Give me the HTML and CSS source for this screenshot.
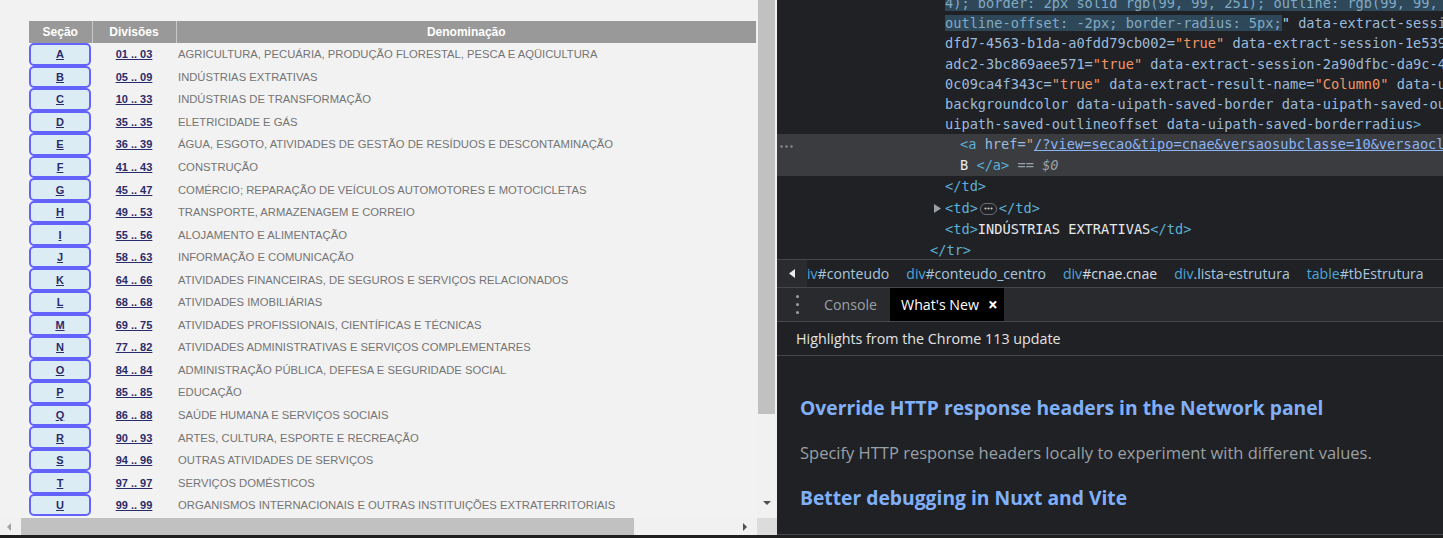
FILE: index.html
```html
<!DOCTYPE html>
<html lang="pt-BR">
<head>
<meta charset="utf-8">
<title>CNAE - Estrutura</title>
<link rel="stylesheet" href="styles.css">
</head>
<body>
<div class="app">
  <div class="page">
    <div class="page-main">
      <div class="viewport">
        <table class="estrutura" id="tbEstrutura">
          <colgroup><col class="c1"><col class="c2"><col class="c3"></colgroup>
          <thead>
            <tr><th>Seção</th><th>Divisões</th><th>Denominação</th></tr>
          </thead>
          <tbody>
            <tr><td><div class="sec"><a href="#">A</a></div></td><td class="div"><a href="#">01 .. 03</a></td><td class="den">AGRICULTURA, PECUÁRIA, PRODUÇÃO FLORESTAL, PESCA E AQÜICULTURA</td></tr>
            <tr><td><div class="sec"><a href="#">B</a></div></td><td class="div"><a href="#">05 .. 09</a></td><td class="den">INDÚSTRIAS EXTRATIVAS</td></tr>
            <tr><td><div class="sec"><a href="#">C</a></div></td><td class="div"><a href="#">10 .. 33</a></td><td class="den">INDÚSTRIAS DE TRANSFORMAÇÃO</td></tr>
            <tr><td><div class="sec"><a href="#">D</a></div></td><td class="div"><a href="#">35 .. 35</a></td><td class="den">ELETRICIDADE E GÁS</td></tr>
            <tr><td><div class="sec"><a href="#">E</a></div></td><td class="div"><a href="#">36 .. 39</a></td><td class="den">ÁGUA, ESGOTO, ATIVIDADES DE GESTÃO DE RESÍDUOS E DESCONTAMINAÇÃO</td></tr>
            <tr><td><div class="sec"><a href="#">F</a></div></td><td class="div"><a href="#">41 .. 43</a></td><td class="den">CONSTRUÇÃO</td></tr>
            <tr><td><div class="sec"><a href="#">G</a></div></td><td class="div"><a href="#">45 .. 47</a></td><td class="den">COMÉRCIO; REPARAÇÃO DE VEÍCULOS AUTOMOTORES E MOTOCICLETAS</td></tr>
            <tr><td><div class="sec"><a href="#">H</a></div></td><td class="div"><a href="#">49 .. 53</a></td><td class="den">TRANSPORTE, ARMAZENAGEM E CORREIO</td></tr>
            <tr><td><div class="sec"><a href="#">I</a></div></td><td class="div"><a href="#">55 .. 56</a></td><td class="den">ALOJAMENTO E ALIMENTAÇÃO</td></tr>
            <tr><td><div class="sec"><a href="#">J</a></div></td><td class="div"><a href="#">58 .. 63</a></td><td class="den">INFORMAÇÃO E COMUNICAÇÃO</td></tr>
            <tr><td><div class="sec"><a href="#">K</a></div></td><td class="div"><a href="#">64 .. 66</a></td><td class="den">ATIVIDADES FINANCEIRAS, DE SEGUROS E SERVIÇOS RELACIONADOS</td></tr>
            <tr><td><div class="sec"><a href="#">L</a></div></td><td class="div"><a href="#">68 .. 68</a></td><td class="den">ATIVIDADES IMOBILIÁRIAS</td></tr>
            <tr><td><div class="sec"><a href="#">M</a></div></td><td class="div"><a href="#">69 .. 75</a></td><td class="den">ATIVIDADES PROFISSIONAIS, CIENTÍFICAS E TÉCNICAS</td></tr>
            <tr><td><div class="sec"><a href="#">N</a></div></td><td class="div"><a href="#">77 .. 82</a></td><td class="den">ATIVIDADES ADMINISTRATIVAS E SERVIÇOS COMPLEMENTARES</td></tr>
            <tr><td><div class="sec"><a href="#">O</a></div></td><td class="div"><a href="#">84 .. 84</a></td><td class="den">ADMINISTRAÇÃO PÚBLICA, DEFESA E SEGURIDADE SOCIAL</td></tr>
            <tr><td><div class="sec"><a href="#">P</a></div></td><td class="div"><a href="#">85 .. 85</a></td><td class="den">EDUCAÇÃO</td></tr>
            <tr><td><div class="sec"><a href="#">Q</a></div></td><td class="div"><a href="#">86 .. 88</a></td><td class="den">SAÚDE HUMANA E SERVIÇOS SOCIAIS</td></tr>
            <tr><td><div class="sec"><a href="#">R</a></div></td><td class="div"><a href="#">90 .. 93</a></td><td class="den">ARTES, CULTURA, ESPORTE E RECREAÇÃO</td></tr>
            <tr><td><div class="sec"><a href="#">S</a></div></td><td class="div"><a href="#">94 .. 96</a></td><td class="den">OUTRAS ATIVIDADES DE SERVIÇOS</td></tr>
            <tr><td><div class="sec"><a href="#">T</a></div></td><td class="div"><a href="#">97 .. 97</a></td><td class="den">SERVIÇOS DOMÉSTICOS</td></tr>
            <tr><td><div class="sec"><a href="#">U</a></div></td><td class="div"><a href="#">99 .. 99</a></td><td class="den">ORGANISMOS INTERNACIONAIS E OUTRAS INSTITUIÇÕES EXTRATERRITORIAIS</td></tr>
          </tbody>
        </table>
      </div>
      <div class="vscroll">
        <div class="vthumb"></div>
        <div class="vtrack"><span class="arr-down"></span></div>
      </div>
    </div>
    <div class="hscroll">
      <div class="hleft"><span class="arr-left"></span></div>
      <div class="hthumb"></div>
      <div class="hmid"><span class="arr-right"></span></div>
      <div class="corner"></div>
    </div>
  </div>

  <div class="devtools">
    <div class="elements">
      <div class="code">
        <div class="ln in1"><span class="sel">4); border: 2px solid rgb(99, 99, 251); outline: rgb(99, 99, 251) solid 2px;</span></div>
        <div class="ln in1"><span class="sel">outline-offset: -2px; border-radius: 5px;</span><span class="q">"</span><span class="an"> data-extract-session-7b3a1c52-</span></div>
        <div class="ln in1"><span class="an">dfd7-4563-b1da-a0fdd79cb002=</span><span class="av">"true"</span><span class="an"> data-extract-session-1e539a4c-</span></div>
        <div class="ln in1"><span class="an">adc2-3bc869aee571=</span><span class="av">"true"</span><span class="an"> data-extract-session-2a90dfbc-da9c-4e21-</span></div>
        <div class="ln in1"><span class="an">0c09ca4f343c=</span><span class="av">"true"</span><span class="an"> data-extract-result-name=</span><span class="av">"Column0"</span><span class="an"> data-uipath-saved-</span></div>
        <div class="ln in1"><span class="an">backgroundcolor data-uipath-saved-border data-uipath-saved-outline</span></div>
        <div class="ln in1"><span class="an">uipath-saved-outlineoffset data-uipath-saved-borderradius</span><span class="tg">&gt;</span></div>
        <div class="selnode">
          <div class="ln2 gutline"><span class="gut"><svg width="13" height="3" viewBox="0 0 13 3"><circle cx="1.5" cy="1.5" r="1.2" fill="#8a8d91"/><circle cx="6.5" cy="1.5" r="1.2" fill="#8a8d91"/><circle cx="11.5" cy="1.5" r="1.2" fill="#8a8d91"/></svg></span><span class="tg">&lt;a </span><span class="an">href=</span><span class="av">"</span><span class="lk">/?view=secao&amp;tipo=cnae&amp;versaosubclasse=10&amp;versaoclasse=7</span><span class="av">"</span><span class="tg">&gt;</span></div>
          <div class="ln2 in2"><span class="tx">B </span><span class="tg">&lt;/a&gt;</span><span class="dim"> == </span><span class="dim it">$0</span></div>
        </div>
        <div class="ln3 in1"><span class="tg">&lt;/td&gt;</span></div>
        <div class="ln3 in1t"><span class="tri"><svg width="7" height="9" viewBox="0 0 7 9"><path d="M0 0 L7 4.5 L0 9 Z" fill="#9aa0a6"/></svg></span><span class="tg">&lt;td&gt;</span><span class="pill"><svg width="9" height="3" viewBox="0 0 9 3"><circle cx="1.5" cy="1.5" r="1.1" fill="#c4c7c5"/><circle cx="4.5" cy="1.5" r="1.1" fill="#c4c7c5"/><circle cx="7.5" cy="1.5" r="1.1" fill="#c4c7c5"/></svg></span><span class="tg">&lt;/td&gt;</span></div>
        <div class="ln3 in1"><span class="tg">&lt;td&gt;</span><span class="tx">INDÚSTRIAS EXTRATIVAS</span><span class="tg">&lt;/td&gt;</span></div>
        <div class="ln3 in0"><span class="tg">&lt;/tr&gt;</span></div>
      </div>
    </div>

    <div class="crumbs">
      <div class="crumb-arrow"><svg width="6" height="9" viewBox="0 0 6 9"><path d="M6 0 L0 4.5 L6 9 Z" fill="#e8eaed"/></svg></div>
      <div class="crumb-list">
        <span class="crumb"><span class="tag">iv</span><span class="rest">#conteudo</span></span>
        <span class="crumb"><span class="tag">div</span><span class="rest">#conteudo_centro</span></span>
        <span class="crumb"><span class="tag">div</span><span class="rest light">#cnae.cnae</span></span>
        <span class="crumb"><span class="tag">div</span><span class="rest">.lista-estrutura</span></span>
        <span class="crumb"><span class="tag">table</span><span class="rest">#tbEstrutura</span></span>
      </div>
    </div>

    <div class="tabs">
      <div class="kebab"><span></span><span></span><span></span></div>
      <div class="tab">Console</div>
      <div class="tab active"><span>What's New</span><span class="close">×</span></div>
    </div>

    <div class="wn-head">Highlights from the Chrome 113 update</div>

    <div class="wn-body">
      <h2 class="wn-title">Override HTTP response headers in the Network panel</h2>
      <p class="wn-text">Specify HTTP response headers locally to experiment with different values.</p>
      <h2 class="wn-title">Better debugging in Nuxt and Vite</h2>
    </div>
  </div>
</div>
</body>
</html>
```

FILE: styles.css
```css
* { box-sizing: border-box; }
html, body { margin: 0; padding: 0; }
body {
  width: 1443px;
  height: 538px;
  overflow: hidden;
  background: #1f1f1f;
}
.app { display: flex; height: 535px; }

/* ---------- left page ---------- */
.page {
  width: 777px;
  flex: none;
  display: flex;
  flex-direction: column;
  background: #f2f2f2;
}
.page-main { display: flex; height: 518px; }
.viewport { width: 757px; overflow: hidden; }

.estrutura {
  margin: 21px 0 0 29px;
  border-collapse: collapse;
  table-layout: fixed;
  width: 727px;
  font-family: "Liberation Sans", Arial, sans-serif;
  font-size: 11px;
}
.estrutura .c1 { width: 63px; }
.estrutura .c2 { width: 84px; }
.estrutura .c3 { width: 580px; }
.estrutura th {
  background: #999999;
  color: #ffffff;
  font-weight: bold;
  font-size: 12px;
  height: 22px;
  padding: 0;
  text-align: center;
  border-left: 1px solid #c9c9c9;
}
.estrutura th:first-child { border-left: 0; }
.estrutura tbody tr { height: 22.55px; }
.estrutura td { padding: 0; vertical-align: middle; }
.estrutura a { color: #2b2b6b; font-weight: bold; text-decoration: underline; }
.sec {
  height: 22.55px;
  width: 62px;
  display: flex;
  align-items: center;
  justify-content: center;
  background: #dcecf5;
  border: 2px solid rgb(99, 99, 251);
  border-radius: 5px;
}
.estrutura .div { text-align: center; }
.estrutura .den { color: #747474; padding-left: 2px; white-space: nowrap; font-size: 11.25px; }

.vscroll {
  width: 20px;
  display: flex;
  flex-direction: column;
  background: #f1f1f1;
}
.vthumb { margin-left: 1px; width: 17px; height: 414px; background: #c1c1c1; }
.vtrack { flex: 1; display: flex; align-items: flex-end; padding: 0 0 13px 6px; }
.arr-down {
  width: 0; height: 0;
  border-left: 4px solid transparent;
  border-right: 4px solid transparent;
  border-top: 4px solid #505050;
}
.hscroll { display: flex; height: 17px; background: #f1f1f1; }
.hleft { width: 21px; display: flex; align-items: center; padding-left: 7px; }
.arr-left {
  width: 0; height: 0;
  border-top: 4px solid transparent;
  border-bottom: 4px solid transparent;
  border-right: 4px solid #a3a3a3;
}
.hthumb { width: 613px; background: #c1c1c1; }
.hmid { flex: 1; display: flex; align-items: center; justify-content: flex-end; padding-right: 10px; }
.arr-right {
  width: 0; height: 0;
  border-top: 4px solid transparent;
  border-bottom: 4px solid transparent;
  border-left: 4px solid #505050;
}
.corner { width: 20px; background: #dcdcdc; }

/* ---------- devtools ---------- */
.devtools {
  width: 666px;
  flex: none;
  display: flex;
  flex-direction: column;
  background: #202124;
  font-family: "Open Sans", "Noto Sans", sans-serif;
  color: #e3e3e3;
  border-bottom: 1px solid #45474b;
}
.elements {
  height: 260px;
  flex: none;
  overflow: hidden;
  border-bottom: 1px solid #45474b;
}
.code {
  margin-top: -7px;
  font-family: "DejaVu Sans Mono", "Liberation Mono", monospace;
  font-size: 13.65px;
  color: #e8eaed;
}
.ln, .ln2, .ln3 { white-space: pre; overflow: hidden; }
.ln { height: 20.2px; line-height: 20.2px; }
.ln2 { height: 21px; line-height: 21px; }
.ln3 { height: 21.3px; line-height: 21.3px; }
.in0 { padding-left: 153px; }
.in1 { padding-left: 168px; }
.in1t { padding-left: 157px; }
.in2 { padding-left: 183px; }
.selnode { background: #3b3c3f; }
.gutline { padding-left: 3px; }
.gut { display: inline-block; width: 180px; vertical-align: middle; line-height: 0; }
.sel { background: #2e4859; color: #82aac4; }
.q { color: #d0d4d8; }
.an { color: #9bbbdc; }
.av { color: #f29766; }
.tg { color: #5db0d7; }
.tx { color: #e8eaed; }
.lk { color: #8ab4f8; text-decoration: underline; }
.dim { color: #9aa0a6; }
.it { font-style: italic; }
.tri { display: inline-block; width: 11px; line-height: 0; vertical-align: middle; }
.pill {
  display: inline-flex;
  align-items: center;
  justify-content: center;
  width: 17px;
  height: 12px;
  margin: 0 2px;
  border: 1px solid #6b6e72;
  border-radius: 6px;
  vertical-align: middle;
}

.crumbs {
  height: 28px;
  flex: none;
  display: flex;
  border-bottom: 1px solid #45474b;
  font-size: 14.1px;
}
.crumb-arrow {
  width: 30px;
  display: flex;
  align-items: center;
  padding-left: 12px;
  background: #2a2b2e;
}
.crumb-list { display: flex; align-items: center; gap: 17px; white-space: nowrap; overflow: hidden; }
.crumb .tag { color: #4ea6d8; }
.crumb .rest { color: #a9c6de; }
.crumb .rest.light { color: #d6dbe0; }

.tabs {
  height: 34px;
  flex: none;
  display: flex;
  align-items: stretch;
  background: #292a2d;
  border-bottom: 1px solid #45474b;
  font-size: 14.2px;
}
.kebab {
  width: 40px;
  display: flex;
  flex-direction: column;
  justify-content: center;
  gap: 5px;
  padding-left: 19px;
}
.kebab span { width: 3px; height: 3px; border-radius: 50%; background: #9aa0a6; }
.tab { display: flex; align-items: center; padding: 0 13px 0 7px; color: #9aa0a6; white-space: nowrap; }
.tab.active { background: #000000; color: #ffffff; padding: 0 6px 0 11px; }
.close { margin-left: 9px; font-size: 17px; line-height: 16px; font-weight: bold; color: #ffffff; }

.wn-head {
  height: 34px;
  flex: none;
  display: flex;
  align-items: center;
  padding-left: 19px;
  font-size: 14.3px;
  color: #e3e3e3;
  border-bottom: 1px solid #45474b;
}
.wn-body { flex: 1; padding: 40px 0 0 23px; }
.wn-title {
  margin: 0;
  font-size: 19.3px;
  line-height: 24px;
  font-weight: bold;
  color: #80b0fa;
  white-space: nowrap;
}
.wn-text {
  margin: 22px 0;
  font-size: 16.5px;
  line-height: 22px;
  color: #9aa0a6;
  white-space: nowrap;
}
```
